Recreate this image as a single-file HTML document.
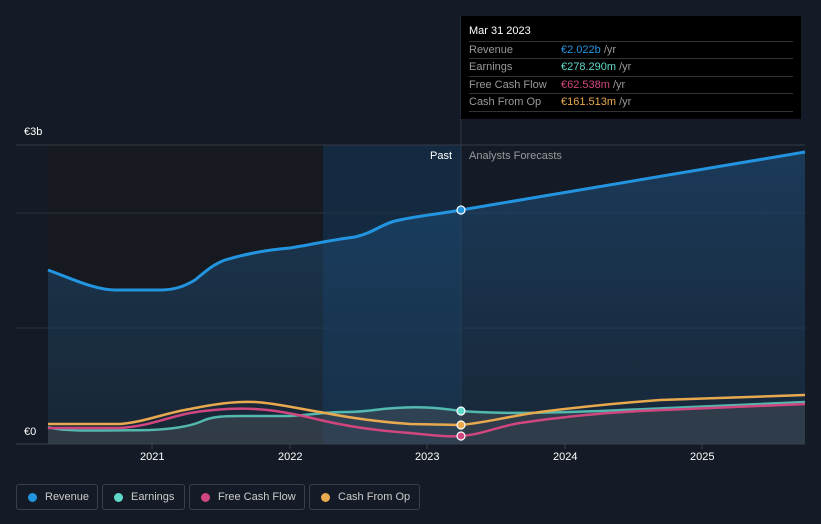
<html><head><style>
body{margin:0;background:#151b26;width:821px;height:524px;overflow:hidden;font-family:"Liberation Sans",sans-serif;position:relative}
.t{position:absolute;font-size:11px;color:#fff}
.lg{position:absolute;top:484px;height:26px;border:1px solid #3a404b;border-radius:3px;box-sizing:border-box;color:#ccc;font-size:11px;line-height:24px;padding-left:28px}
.lg i{position:absolute;left:11px;top:8px;width:9px;height:9px;border-radius:50%}
.tip{position:absolute;left:461px;top:16px;width:340px;height:103px;background:#000;color:#fff;font-size:11px}
.row{position:absolute;left:8px;width:324px;height:17px;border-top:1px solid #333;color:#999;line-height:17px}
.row b{font-weight:normal;position:absolute;left:92px}
.row span{color:#999}
</style></head><body>
<svg width="821" height="524" style="position:absolute;left:0;top:0">
<defs><linearGradient id="g" x1="0" y1="0" x2="0" y2="1"><stop offset="0" stop-color="#1d4f7c" stop-opacity=".6"/><stop offset="1" stop-color="#1d3a55" stop-opacity=".4"/></linearGradient></defs>
<rect x="48" y="145" width="413" height="299" fill="#161a20"/>
<rect x="323" y="145" width="138" height="299" fill="#142a40"/>
<line x1="16" y1="145" x2="805" y2="145" stroke="#333a45"/>
<line x1="16" y1="213" x2="805" y2="213" stroke="#2a313c"/>
<line x1="16" y1="328" x2="805" y2="328" stroke="#2a313c"/>
<line x1="461" y1="16" x2="461" y2="444" stroke="#2a3a4a"/>
<path d="M48,270 C70,278 95,290 115,290 L160,290 C175,290 185,286 195,280 C205,272 212,265 225,260 C245,254 265,250 290,248 C310,245 330,240 355,237 C375,232 380,225 395,221 C415,216 440,214 461,210 L805,152 L805,444 L48,444Z" fill="url(#g)"/>
<path d="M48,270 C70,278 95,290 115,290 L160,290 C175,290 185,286 195,280 C205,272 212,265 225,260 C245,254 265,250 290,248 C310,245 330,240 355,237 C375,232 380,225 395,221 C415,216 440,214 461,210 L805,152" fill="none" stroke="#2394df" stroke-width="3"/>
<path d="M48,427 C60,431 80,431 150,430 C175,429 190,426 200,422 C210,417 220,416 240,416 L290,416 C310,415 325,412 345,412 C370,412 375,409 395,408 C420,406 440,408 461,411 C500,414 540,413 600,411 L805,402 L805,444 L48,444Z" fill="#5d6066" fill-opacity=".35"/>
<path d="M48,427 C60,431 80,431 150,430 C175,429 190,426 200,422 C210,417 220,416 240,416 L290,416 C310,415 325,412 345,412 C370,412 375,409 395,408 C420,406 440,408 461,411 C500,414 540,413 600,411 L805,402" fill="none" stroke="#5fd9c9" stroke-opacity=".8" stroke-width="2.5"/>
<path d="M48,428 L120,428 C150,426 165,418 190,413 C215,409 235,408 255,409 C275,410 300,415 320,420 C350,427 380,431 410,433 C440,436 450,437 461,436 C480,435 500,426 520,423 C560,417 600,413 640,411 L805,404" fill="none" stroke="#d0467f" stroke-width="2.5"/>
<path d="M48,424 L120,424 C145,422 165,413 190,409 C215,404 235,401 255,402 C275,403 300,409 320,412 C350,418 380,422 410,424 L461,425 C490,422 510,416 540,412 C580,407 620,403 660,400 L805,395" fill="none" stroke="#e9a94f" stroke-width="2.5"/>
<line x1="16" y1="444" x2="805" y2="444" stroke="#3a404b"/>
<g stroke="#fff" stroke-width="1.2"><circle cx="461" cy="210" r="4" fill="#2394df"/><circle cx="461" cy="411" r="4" fill="#5fd9c9"/><circle cx="461" cy="425" r="4" fill="#e9a94f"/><circle cx="461" cy="436" r="4" fill="#d0467f"/></g>
<g stroke="#3a404b"><line x1="152" y1="444" x2="152" y2="449"/><line x1="290" y1="444" x2="290" y2="449"/><line x1="427" y1="444" x2="427" y2="449"/><line x1="565" y1="444" x2="565" y2="449"/><line x1="702" y1="444" x2="702" y2="449"/></g>
</svg>
<div class="t" style="left:24px;top:126px">€3b</div>
<div class="t" style="left:24px;top:426px">€0</div>
<div class="t" style="left:430px;top:150px">Past</div>
<div class="t" style="left:469px;top:150px;color:#999">Analysts Forecasts</div>
<div class="t" style="left:140px;top:451px">2021</div>
<div class="t" style="left:278px;top:451px">2022</div>
<div class="t" style="left:415px;top:451px">2023</div>
<div class="t" style="left:553px;top:451px">2024</div>
<div class="t" style="left:690px;top:451px">2025</div>
<div class="tip">
<div style="position:absolute;left:8px;top:9px">Mar 31 2023</div>
<div class="row" style="top:25px">Revenue<b style="color:#2394df">€2.022b <span>/yr</span></b></div>
<div class="row" style="top:42px">Earnings<b style="color:#5fd9c9">€278.290m <span>/yr</span></b></div>
<div class="row" style="top:60px">Free Cash Flow<b style="color:#d0467f">€62.538m <span>/yr</span></b></div>
<div class="row" style="top:77px">Cash From Op<b style="color:#e9a94f">€161.513m <span>/yr</span></b></div>
<div class="row" style="top:95px;height:0"></div>
</div>
<div class="lg" style="left:16px;width:82px"><i style="background:#2394df"></i>Revenue</div>
<div class="lg" style="left:102px;width:83px"><i style="background:#5fd9c9"></i>Earnings</div>
<div class="lg" style="left:189px;width:116px"><i style="background:#d0467f"></i>Free Cash Flow</div>
<div class="lg" style="left:309px;width:111px"><i style="background:#e9a94f"></i>Cash From Op</div>
</body></html>
